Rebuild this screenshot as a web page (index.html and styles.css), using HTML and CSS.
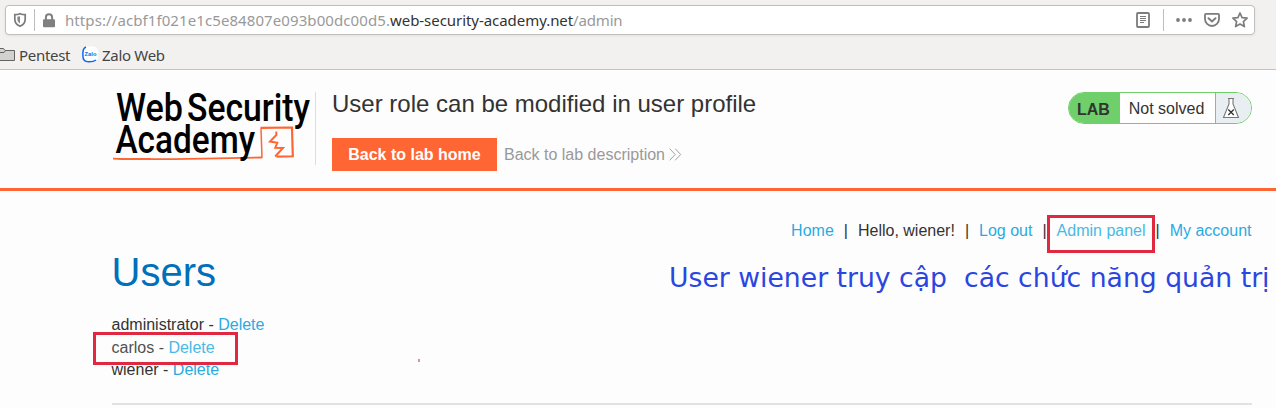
FILE: index.html
```html
<!DOCTYPE html>
<html lang="en">
<head>
<meta charset="utf-8">
<title>User role can be modified in user profile</title>
<link rel="stylesheet" href="styles.css">
</head>
<body>
<div class="chrome">
  <div class="urlbar">
    <svg class="shield" width="14" height="16" viewBox="0 0 14 16"><path d="M7 1.700c1.800.7 3.400.9 5.200.9v4.400c0 3.500-2.100 6-5.200 7.200C3.900 13 1.800 10.500 1.800 7V2.600C3.600 2.600 5.200 2.400 7 1.700z" fill="none" stroke="#7b7b7b" stroke-width="1.700"/><path d="M7 4.200v7.200C5.200 10.400 4.300 9 4.300 7V4.700z" fill="#8a8a8a"/></svg>
    <span class="sep"></span>
    <svg class="lock" width="12" height="15" viewBox="0 0 12 15"><path d="M2.900 7V4.300a3.100 3.100 0 0 1 6.200 0V7" fill="none" stroke="#808080" stroke-width="2"/><rect y="6.300" width="12" height="8" rx="1" fill="#808080"/></svg>
    <div class="url"><span class="u1">https://acbf1f021e1c5e84807e093b00dc00d5.</span><span class="u2">web-security-academy.net</span><span class="u3">/admin</span></div>
    <svg class="tools" width="116" height="22" viewBox="1135 9 116 22" fill="none" stroke="#7c7c7c">
      <rect x="1137" y="13" width="12" height="14" rx="1" stroke-width="1.800"/><path d="M1140 16.500h6M1140 18.500h6M1140 20.500h6M1140 22.500h4" stroke-width="1"/>
      <path d="M1163.500 9v22" stroke="#bdbdbd"/>
      <g fill="#7c7c7c" stroke="none"><circle cx="1178" cy="20" r="1.900"/><circle cx="1184" cy="20" r="1.900"/><circle cx="1190" cy="20" r="1.900"/></g>
      <path d="M1206 13.800h12q1 0 1 1v4.200a7 7 0 0 1-14 0v-4.200q0-1 1-1z" stroke-width="1.800"/><path d="M1208.500 18.200l3.500 3.300 3.500-3.300" stroke-width="1.900" stroke-linecap="round"/>
      <path d="M1240 13l2.100 4.600 5 .6-3.700 3.400 1 5-4.400-2.500-4.400 2.500 1-5-3.700-3.400 5-.6z" stroke-width="1.700" stroke-linejoin="round"/>
    </svg>
  </div>
  <div class="bookmarks">
    <svg width="15" height="15" viewBox="0 0 15 15"><path d="M-3 1.500H3.500L5 3.500h9.500v10H-3z" fill="#d2d1cf" stroke="#646464"/><path d="M-3 5.500H4L5.500 3.500" fill="none" stroke="#646464"/></svg>
    <span class="pent">Pentest</span>
    <svg class="zalo" width="17" height="17" viewBox="0 0 17 17"><rect x=".5" y=".5" width="15.500" height="15.500" rx="5" fill="#fff"/><path d="M4 1C1.500 2 .9 4 .9 7v3c0 4 2 5.700 5.500 5.700 3.500.1 5.600-.1 7.600-1.700" fill="none" stroke="#1268e8" stroke-width="1.500"/><text class="zt" x="2.500" y="9.800" textLength="12" lengthAdjust="spacingAndGlyphs">Zalo</text></svg>
    <span class="zweb">Zalo Web</span>
  </div>
</div>
<header class="lab">
  <svg class="logo" width="204" height="76" viewBox="112 90 204 76">
    <g class="word"><text x="116" y="121" textLength="67" lengthAdjust="spacingAndGlyphs">Web</text><text x="187" y="121" textLength="123" lengthAdjust="spacingAndGlyphs">Security</text></g>
    <path d="M113 158.600c20 .8 50 .7 90 0l59-1.100" fill="none" stroke="#ff6633" stroke-width="1.800"/>
    <path d="M262 158L261 128.500" fill="none" stroke="#ff6633" stroke-width="1.500"/>
    <path d="M260.500 127.900l31.500-.4.800 28.800-16.300.4" fill="none" stroke="#ff6633" stroke-width="2.200"/>
    <path d="M276.300 131.500v3.500l-6.300 6.600 7.300 1.200-2 4.900 7.700.2-7.800 8.600" fill="none" stroke="#ff6633" stroke-width="2"/>
    <path d="M113 158.200l38-.3v2.200l-30-.1z" fill="#ff6633"/>
    <g class="word"><text x="115.500" y="153" textLength="139.500" lengthAdjust="spacingAndGlyphs">Academy</text></g>
  </svg>
  <div class="title">
    <h2>User role can be modified in user profile</h2>
    <div class="actions"><a class="button">Back to lab home</a><a class="back">Back to lab description</a><svg width="13" height="13" viewBox="0 0 13 13"><path d="M.7.700l5.500 5.800L.7 12.300M6.200.700l5.500 5.800-5.500 5.800" fill="none" stroke="#999" stroke-width=".9"/></svg></div>
  </div>
  <div class="status"><b>LAB</b><span class="state">Not solved</span><span class="flask"><svg width="18" height="22" viewBox="0 0 18 22"><path d="M6 1.500h6M7 1.500v5.500L1.500 20.500h15L11 7V1.500" fill="#fff" stroke="#777" stroke-width="1.100"/><path d="M6.300 12.500l5.500 5.500M11.800 12.500L6.300 18" stroke="#333" stroke-width="1.300"/></svg></span></div>
</header>
<main>
  <nav><a>Home</a><i>|</i><span>Hello, wiener!</span><i>|</i><a>Log out</a><i>|</i><a class="admin">Admin panel</a><i>|</i><a>My account</a></nav>
  <h1>Users</h1>
  <div class="users">
    <div>administrator - <a>Delete</a></div>
    <div class="carlos">carlos - <a>Delete</a></div>
    <div>wiener - <a>Delete</a></div>
  </div>
  <hr>
</main>
<div class="mark adminbox"></div>
<div class="mark carlosbox"></div>
<div class="speck"></div>
<div class="note">User wiener truy cập&nbsp; các chức năng quản trị</div>
</body>
</html>
```
FILE: styles.css
```css
* { box-sizing: border-box; }
body { margin: 0; height: 408px; overflow: hidden; position: relative; background: #fdfdfd; font: 16px/20px "Liberation Sans", sans-serif; color: #333332; }
svg { display: block; flex: none; }
.chrome { height: 70px; background: #f2f1f0; border-bottom: 1px solid #c3c3c3; padding: 5px 21px 0 5px; font-family: "Noto Sans", sans-serif; }
.urlbar { height: 30px; border: 1px solid #c0bfbd; border-radius: 4px; background: #fff; display: flex; align-items: center; padding: 0 3px 0 7px; box-shadow: 0 1px 3px rgba(0,0,0,.07); }
.sep { width: 1px; height: 22px; background: #bdbdbd; margin: 0 8px 0 7px; }
.url { display: flex; flex: 1; margin-left: 10px; font-size: 15px; white-space: nowrap; color: #999; }
.u1 { width: 325px; letter-spacing: .09px; }
.u2 { width: 183px; letter-spacing: -.05px; color: #333; }
.u3 { letter-spacing: -.15px; }
.bookmarks { display: flex; align-items: center; height: 34px; padding-top: 5px; margin-left: -5px; font-size: 15px; color: #444; white-space: nowrap; }
.pent { width: 64px; padding-left: 4px; letter-spacing: -.3px; }
.zalo { margin-left: 3px; }
.zweb { margin-left: 3px; letter-spacing: -.3px; }
.zt { font: bold 6px "Liberation Sans", sans-serif; fill: #1268e8; }
.lab { height: 121px; border-bottom: 3px solid #ff6633; display: flex; align-items: flex-start; padding: 20px 24px 0 112px; }
.logo { overflow: visible; }
.word { font: 500 38px Roboto, sans-serif; fill: #000; }
.title { margin-top: 2px; border-left: 1px solid #ddd; height: 73px; padding-left: 16px; margin-left: -1px; flex: 1; }
h2 { margin: 0; font-size: 24px; line-height: 24px; font-weight: 400; white-space: nowrap; }
.actions { display: flex; align-items: center; margin-top: 22px; color: #999; }
.button { background: #ff6633; color: #fff; font-weight: 700; width: 165px; height: 33px; line-height: 33px; text-align: center; margin-right: 7px; }
.actions svg { margin-left: 4px; }
.status { margin-top: 2px; width: 184px; height: 32px; border: 1px solid #6fcf6a; border-radius: 16px; overflow: hidden; display: flex; line-height: 31px; background: #fff; }
.status b { width: 51px; background: #6fcf6a; padding-left: 8px; line-height: 33px; }
.state { width: 96px; padding-right: 2px; text-align: center; border-right: 1px solid #6fcf6a; }
.flask { flex: 1; background: #e9eef2; padding: 4px 0 0 6px; }
main { padding: 30px 24px 0 111.500px; }
nav { display: flex; justify-content: flex-end; padding-right: .5px; }
i { font-style: normal; margin: 0 10px; }
a { color: #29abe2; }
.actions a { color: #999; }
.actions .button { color: #fff; }
.admin { color: #4ab9e6; }
h1 { margin: 8px 0 0; font-size: 40px; line-height: 46px; color: #0070bb; font-weight: 400; }
.users { margin-top: 19px; line-height: 22.700px; }
.carlos { color: #515150; }
.carlos a { color: #4ab9e6; }
hr { margin: 21px 0 0; border: 0; height: 2px; background: #e2e2e2; }
.mark { position: absolute; border: 3px solid #e02840; }
.adminbox { left: 1047px; top: 215px; width: 108px; height: 38px; }
.carlosbox { left: 93px; top: 332px; width: 145px; height: 33px; }
.speck { position: absolute; left: 418px; top: 359px; width: 2px; height: 3px; background: #f08a98; }
.note { position: absolute; left: 669px; top: 261px; font: 26.670px/34px "DejaVu Sans", sans-serif; color: #2b46e0; white-space: nowrap; }
```
